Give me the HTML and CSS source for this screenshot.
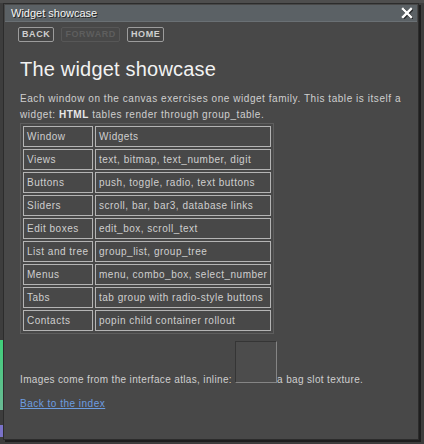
FILE: index.html
```html
<!DOCTYPE html>
<html lang="en">
<head>
    <meta charset="UTF-8">
    <meta name="viewport" content="width=device-width, initial-scale=1.0">
    <title>Widget showcase</title>
    <link rel="stylesheet" href="styles.css">
</head>
<body>
    <div class="desktop">
        <div class="behind behind-top"></div>
        <div class="behind behind-green"></div>
        <div class="behind behind-purple"></div>

        <div class="window">
            <div class="titlebar">
                <span class="title">Widget showcase</span>
                <button class="close" title="Close">
                    <svg width="12" height="12" viewBox="0 0 12 12">
                        <path d="M2 2 L10 10 M10 2 L2 10" stroke="#000" stroke-width="3" stroke-linecap="square" transform="translate(0.8 0.8)" opacity="0.6"/>
                        <path d="M2 2 L10 10 M10 2 L2 10" stroke="#fff" stroke-width="2.4" stroke-linecap="square"/>
                    </svg>
                </button>
            </div>

            <div class="nav">
                <button class="nav-btn">BACK</button>
                <button class="nav-btn" disabled>FORWARD</button>
                <button class="nav-btn">HOME</button>
            </div>

            <div class="page">
                <h1>The widget showcase</h1>
                <p class="intro">Each window on the canvas exercises one widget family. This table is itself a widget: <b>HTML</b> tables render through group_table.</p>

                <table class="widgets">
                    <tr><td class="name">Window</td><td>Widgets</td></tr>
                    <tr><td class="name">Views</td><td>text, bitmap, text_number, digit</td></tr>
                    <tr><td class="name">Buttons</td><td>push, toggle, radio, text buttons</td></tr>
                    <tr><td class="name">Sliders</td><td>scroll, bar, bar3, database links</td></tr>
                    <tr><td class="name">Edit boxes</td><td>edit_box, scroll_text</td></tr>
                    <tr><td class="name">List and tree</td><td>group_list, group_tree</td></tr>
                    <tr><td class="name">Menus</td><td>menu, combo_box, select_number</td></tr>
                    <tr><td class="name">Tabs</td><td>tab group with radio-style buttons</td></tr>
                    <tr><td class="name">Contacts</td><td>popin child container rollout</td></tr>
                </table>

                <p class="atlas">Images come from the interface atlas, inline: <span class="slot"></span>a bag slot texture.</p>
                <p class="back"><a href="#">Back to the index</a></p>
            </div>
        </div>
    </div>
</body>
</html>
```

FILE: styles.css
```css
body {
    margin: 0;
    background-color: #3a3a3a;
    font-family: 'Liberation Sans', Arial, sans-serif;
    color: #cfcfcf;
}
.desktop {
    position: relative;
    width: 424px;
    height: 444px;
    overflow: hidden;
    background: #3d3d3d;
}
.behind {
    position: absolute;
}
.behind-top {
    left: 0;
    top: 0;
    width: 424px;
    height: 3px;
    background: #4e4e4e;
}
.behind-green {
    left: 0;
    top: 340px;
    width: 3px;
    height: 70px;
    background: linear-gradient(#3fd07a, #6ab894);
}
.behind-purple {
    left: 0;
    top: 425px;
    width: 3px;
    height: 12px;
    background: #7a72c8;
}
.window {
    position: absolute;
    left: 3px;
    top: 3px;
    width: 414px;
    height: 435px;
    background: #484848;
    border: 1px solid #2c2c2c;
    box-shadow: 2px 2px 0 #1e1e1e;
}
.titlebar {
    display: flex;
    align-items: center;
    justify-content: space-between;
    height: 17px;
    margin: 1px;
    padding: 0 4px 0 6px;
    background: #5b6165;
    border-bottom: 1px solid #6a7074;
    box-sizing: border-box;
}
.title {
    font-size: 11px;
    line-height: 17px;
    color: #f4f4f4;
    text-shadow: 1px 1px 0 #222;
}
.close {
    display: flex;
    padding: 0;
    border: none;
    background: none;
    cursor: pointer;
}
.nav {
    display: flex;
    gap: 7px;
    margin-top: 5px;
    padding-left: 14px;
}
.nav-btn {
    height: 15px;
    padding: 0 3px;
    border: 1px solid #9c9c9c;
    border-radius: 2px;
    background: #444;
    color: #cfcfcf;
    font-family: 'Liberation Sans', Arial, sans-serif;
    font-size: 9px;
    font-weight: bold;
    letter-spacing: 0.6px;
    line-height: 13px;
    cursor: pointer;
}
.nav-btn:disabled {
    border-color: #575757;
    color: #5e5e5e;
    background: #484848;
    cursor: default;
}
.page {
    padding: 0 16px;
}
h1 {
    margin: 16px 0 0;
    font-size: 20px;
    font-weight: normal;
    line-height: 22px;
    letter-spacing: 0.2px;
    color: #f2f2f2;
}
p {
    margin: 0;
    font-size: 10px;
}
.intro {
    margin-top: 11px;
    line-height: 15.5px;
    letter-spacing: 0.55px;
}
.intro b {
    color: #e8e8e8;
}
.widgets {
    margin-top: 1px;
    border: 1px solid #5e5e5e;
    border-spacing: 2px;
    font-size: 10px;
}
.widgets td {
    width: 168px;
    padding: 3px;
    border: 1px solid #b4b4b4;
    line-height: 13px;
    color: #cfcfcf;
    white-space: nowrap;
    letter-spacing: 0.5px;
}
.widgets td.name {
    width: 62px;
}
.atlas {
    margin-top: 7px;
    line-height: 16px;
    letter-spacing: 0.35px;
}
.slot {
    display: inline-block;
    width: 40px;
    height: 40px;
    background: #4c4c4c;
    border: 1px solid #858585;
    border-top-color: #353535;
    border-left-color: #353535;
}
.back {
    margin-top: 8px;
    line-height: 16px;
    letter-spacing: 0.5px;
}
.back a {
    color: #6d9de0;
}
```
